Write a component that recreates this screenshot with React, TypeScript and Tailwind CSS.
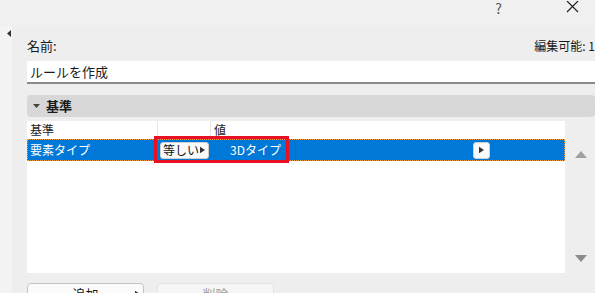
import React from 'react';

const font = { fontFamily: '"Noto Sans CJK JP", "Noto Sans", sans-serif' };

const Tri = ({ className }: { className: string }) => (
  <svg className={className} viewBox="0 0 6 8" width="5" height="8">
    <path d="M0 0 L6 4 L0 8 Z" fill="currentColor" />
  </svg>
);

const App = () => {
  return (
    <div className="w-[595px] h-[293px] overflow-hidden bg-[#f0f0f0] text-[12px] text-[#1a1a1a] flex flex-col" style={font}>
      {/* title bar */}
      <div className="h-[26px] shrink-0 flex items-start justify-end bg-[#f0f0f0]">
        <span className="mr-[64px] mt-0 text-[14px] text-[#555] leading-[16px]">?</span>
        <svg className="mr-[16px] mt-[1px]" width="13" height="12" viewBox="0 0 13 12">
          <path d="M1 0 L12 11 M12 0 L1 11" stroke="#222" strokeWidth="1.2" />
        </svg>
      </div>

      <div className="flex shrink-0 h-[267px]">
        {/* left strip */}
        <div className="w-[12px] shrink-0 bg-[#f3f3f3] pt-[4px] pl-[7px]">
          <svg width="4" height="7" viewBox="0 0 4 7">
            <path d="M4 0 L0 3.5 L4 7 Z" fill="#333" />
          </svg>
        </div>

        <div className="flex-1 bg-[#eeeeee] pl-[15px] pr-[5px] pt-[12px]">
          <div className="flex justify-between items-center h-[16px] leading-[16px]">
            <span className="text-[13px]">名前:</span>
            <span className="text-[12px]">編集可能: 1</span>
          </div>

          <div className="mt-[7px] h-[23px] bg-white border-b-2 border-[#8a8a8a] flex items-center pl-[3px] text-[13px]">
            ルールを作成
          </div>

          <div className="mt-[11px] h-[22px] bg-[#d7d7d7] rounded-[4px] flex items-center pl-[6px]">
            <svg width="7" height="4" viewBox="0 0 7 4">
              <path d="M0 0 L7 0 L3.5 4 Z" fill="#444" />
            </svg>
            <span className="ml-[6px] text-[13px] font-bold">基準</span>
          </div>

          <div className="mt-[4px] flex">
            {/* table */}
            <div className="w-[538px] h-[152px] bg-white">
              <div className="h-[18px] flex text-[12px] leading-[18px]">
                <div className="w-[131px] pl-[3px] border-r border-[#e6e6e6]">基準</div>
                <div className="w-[53px] border-r border-[#e6e6e6]"></div>
                <div className="flex-1 pl-[3px]">値</div>
              </div>
              <div className="relative h-[22px] bg-[#0078d7] border border-dotted border-[#f0a040] flex items-center text-white text-[12px]">
                <span className="w-[130px] pl-[2px]">要素タイプ</span>
                <div className="w-[53px] flex justify-center">
                  <div className="h-[17px] w-[49px] bg-[#fafafa] rounded-[3px] border border-[#cfcfcf] flex items-center justify-between pl-[2px] pr-[3px] text-[#111] leading-none">
                    <span>等しい</span>
                    <Tri className="text-[#333]" />
                  </div>
                </div>
                <span className="w-[70px] text-right whitespace-nowrap">3Dタイプ</span>
                <div className="ml-[192px] h-[17px] w-[17px] bg-[#fafafa] rounded-[3px] border border-[#cfcfcf] flex items-center justify-center">
                  <Tri className="text-[#333]" />
                </div>
                {/* red highlight */}
                <div className="absolute left-[126px] top-[-4px] w-[135px] h-[27px] border-[3px] border-[#e81123]"></div>
              </div>
            </div>
            {/* scrollbar */}
            <div className="w-[30px] h-[152px] flex flex-col items-center justify-between pt-[30px] pb-[11px] pl-[2px]">
              <svg width="12" height="7" viewBox="0 0 12 7">
                <path d="M6 0 L12 7 L0 7 Z" fill="#a0a0a0" />
              </svg>
              <svg width="12" height="7" viewBox="0 0 12 7">
                <path d="M0 0 L12 0 L6 7 Z" fill="#8c8c8c" />
              </svg>
            </div>
          </div>

          <div className="mt-[10px] flex gap-[13px]">
            <div className="w-[117px] h-[24px] rounded-[4px] border border-[#c4c4c4] bg-[#fbfbfb] flex items-start justify-center pt-[2px] leading-[16px] relative text-[13px]">
              追加
              <Tri className="absolute right-[3px] top-[6px] text-[#333]" />
            </div>
            <div className="w-[117px] h-[24px] rounded-[4px] border border-[#e3e3e3] bg-[#f6f6f6] flex items-start justify-center pt-[2px] leading-[16px] text-[13px] text-[#a0a0a0]">
              削除
            </div>
          </div>
        </div>
      </div>
    </div>
  );
};

export default App;
